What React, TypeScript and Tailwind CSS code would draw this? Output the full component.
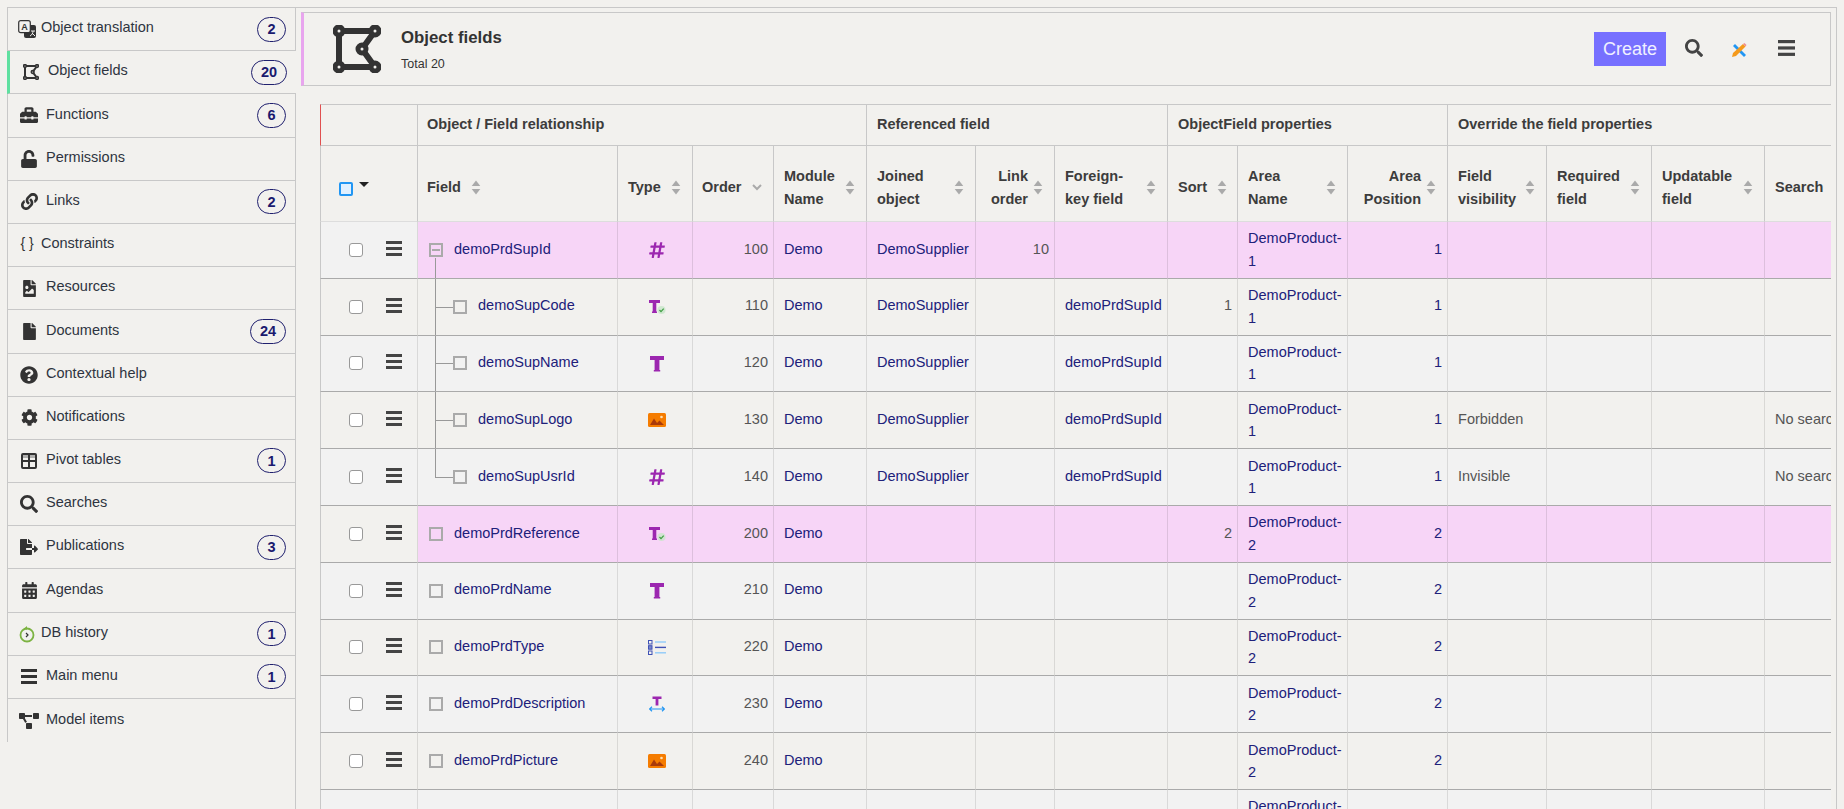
import type { ReactNode } from "react"
import {
  FaToolbox, FaUnlock, FaLink, FaFileImage, FaFile, FaQuestionCircle, FaCog,
  FaSearch, FaFileExport, FaCalendarAlt, FaHashtag, FaProjectDiagram,
} from "react-icons/fa"

// ─── Small drawings ───────────────────────────────────────────────────────────
function VectorIcon({ size }: { size: number }) {
  const nodes = [[6, 6], [42, 6], [29, 24], [42, 42], [6, 42]]
  return (
    <svg viewBox="0 0 48 48" width={size} height={size}>
      <path d="M6 6H42L29 24L42 42H6Z" fill="none" stroke="#333" strokeWidth="6" />
      {nodes.map(([x, y]) => (
        <circle key={x * 100 + y} cx={x} cy={y} r="4" fill="#f2f1ee" stroke="#333" strokeWidth="5" />
      ))}
    </svg>
  )
}

function BarsIcon({ size = 16, color = "#444" }: { size?: number; color?: string }) {
  return (
    <svg viewBox="0 0 16 15" width={size} height={(size * 15) / 16} fill={color}>
      <rect x="0" y="0" width="16" height="3" />
      <rect x="0" y="6" width="16" height="3" />
      <rect x="0" y="12" width="16" height="3" />
    </svg>
  )
}

function TranslateIcon() {
  return (
    <svg viewBox="0 0 18 18" width="18" height="18">
      <rect x="6" y="5" width="12" height="13" rx="2" fill="#333" />
      <rect x="0.7" y="0.7" width="11.6" height="12" rx="2" fill="#f2f1ee" stroke="#333" strokeWidth="1.2" />
      <text x="6.5" y="10" fontSize="9" fontWeight="700" textAnchor="middle" fill="#333" fontFamily="Liberation Sans">A</text>
      <path d="M13 11h4M15 11c0 2-1 4-3 5M14 13c1 1 2 2 3 3" stroke="#f2f1ee" strokeWidth="1" fill="none" />
    </svg>
  )
}

function PivotIcon() {
  return (
    <svg viewBox="0 0 16 16" width="16" height="16">
      <rect x="1" y="1" width="14" height="14" rx="1" fill="none" stroke="#333" strokeWidth="2" />
      <path d="M8 1v14M1 8h14" stroke="#333" strokeWidth="2" />
      <path d="M1 1h14v4H1z" fill="#333" opacity="0.35" />
    </svg>
  )
}

function HistoryIcon() {
  return (
    <svg viewBox="0 0 16 18" width="16" height="18">
      <circle cx="8" cy="10" r="6.5" fill="none" stroke="#7cb342" strokeWidth="1.8" />
      <path d="M8 1l-2.4 2L8 5z" fill="#7cb342" />
      <path d="M7 8l2 2-2 2" fill="none" stroke="#333" strokeWidth="1.2" />
    </svg>
  )
}

function RulerPencilIcon() {
  return (
    <svg viewBox="0 0 16 16" width="16" height="16">
      <path d="M2 4L4 2L15 13L13 15Z" fill="#2196f3" />
      <path d="M1 15L2 11L12 2L14.5 4.5L5 14Z" fill="#f59a1b" />
      <path d="M12 2L13.5 1L15.5 3L14.5 4.5Z" fill="#ef8f8f" />
    </svg>
  )
}

function TypeT({ small }: { small?: boolean }) {
  if (small) return <path d="M0 1h11v3H7.3v8.5h0.7V14H3v-1.5h0.7V4H0z" fill="#9c27b0" />
  return <path d="M1 1h14v4h-4.6v10h0.8v1.5H4.8V15h0.8V5H1z" fill="#9c27b0" />
}

function TypeIcon({ kind }: { kind: string }) {
  if (kind === "hash") return <FaHashtag size={18} color="#9c27b0" />
  if (kind === "t")
    return (
      <svg viewBox="0 0 16 17" width="16" height="17">
        <TypeT />
      </svg>
    )
  if (kind === "tcheck")
    return (
      <svg viewBox="0 0 17 16" width="17" height="16">
        <TypeT small />
        <circle cx="12.5" cy="11" r="4" fill="#c8e6c9" opacity="0.8" />
        <path d="M10.5 11l1.5 1.6 2.7-3" fill="none" stroke="#43a047" strokeWidth="1.3" />
      </svg>
    )
  if (kind === "img")
    return (
      <svg viewBox="0 0 18 14" width="18" height="14">
        <rect width="18" height="14" rx="1.5" fill="#f57c00" />
        <path d="M2 12L6 5.5L9 10L11.5 7.5L16 12Z" fill="#a93a0a" />
        <circle cx="13.5" cy="4" r="1.3" fill="#ffe0b2" />
      </svg>
    )
  if (kind === "list")
    return (
      <svg viewBox="0 0 18 15" width="18" height="15">
        <rect x="0.5" y="0.5" width="3.5" height="3.5" fill="none" stroke="#3f51b5" />
        <rect x="0.5" y="5.7" width="3.5" height="3.5" fill="#7986cb" stroke="#3f51b5" />
        <rect x="0.5" y="11" width="3.5" height="3.5" fill="none" stroke="#3f51b5" />
        <path d="M7 2h11" stroke="#90caf9" strokeWidth="1.4" />
        <path d="M7 7.4h11" stroke="#3f51b5" strokeWidth="1.4" />
        <path d="M7 12.8h11" stroke="#90caf9" strokeWidth="1.4" />
      </svg>
    )
  return (
    <svg viewBox="0 0 16 16" width="16" height="16">
      <path d="M3.5 0.5h9v2.6H9.4v6.4H6.6V3.1H3.5z" fill="#9c27b0" />
      <path d="M0.5 13h15M3 10.8L0.5 13L3 15.2M13 10.8L15.5 13L13 15.2" fill="none" stroke="#2196f3" strokeWidth="1.2" />
    </svg>
  )
}

function SortIcon() {
  return (
    <svg viewBox="0 0 9 14" width="10" height="15" className="shrink-0" fill="#aaa">
      <path d="M4.5 0.5L8.5 5.5H0.5Z" />
      <path d="M4.5 13.5L8.5 8.5H0.5Z" />
    </svg>
  )
}

function ChevronIcon() {
  return (
    <svg viewBox="0 0 10 7" width="10" height="7" className="shrink-0">
      <path d="M1 1l4 4 4-4" fill="none" stroke="#aaa" strokeWidth="2" />
    </svg>
  )
}

// ─── Data ─────────────────────────────────────────────────────────────────────
const MENU: { label: string; icon: ReactNode; count?: number; narrow?: boolean; active?: boolean }[] = [
  { label: "Object translation", icon: <TranslateIcon />, count: 2, narrow: true },
  { label: "Object fields", icon: <VectorIcon size={16} />, count: 20, active: true },
  { label: "Functions", icon: <FaToolbox size={18} color="#333" />, count: 6 },
  { label: "Permissions", icon: <FaUnlock size={18} color="#333" /> },
  { label: "Links", icon: <FaLink size={17} color="#333" />, count: 2 },
  { label: "Constraints", icon: <span className="text-[14px] text-[#333] pb-[3px]">{"{ }"}</span>, narrow: true },
  { label: "Resources", icon: <FaFileImage size={17} color="#333" /> },
  { label: "Documents", icon: <FaFile size={17} color="#333" />, count: 24 },
  { label: "Contextual help", icon: <FaQuestionCircle size={18} color="#333" /> },
  { label: "Notifications", icon: <FaCog size={17} color="#333" /> },
  { label: "Pivot tables", icon: <PivotIcon />, count: 1 },
  { label: "Searches", icon: <FaSearch size={18} color="#333" /> },
  { label: "Publications", icon: <FaFileExport size={18} color="#333" />, count: 3 },
  { label: "Agendas", icon: <FaCalendarAlt size={17} color="#333" /> },
  { label: "DB history", icon: <HistoryIcon />, count: 1, narrow: true },
  { label: "Main menu", icon: <BarsIcon size={16} color="#333" />, count: 1 },
  { label: "Model items", icon: <FaProjectDiagram size={20} color="#333" /> },
]

const COLUMNS: { label: string; width: string; wide?: boolean; right?: boolean; order?: boolean; plain?: boolean; tight?: boolean }[] = [
  { label: "Field", width: "w-[200px]", tight: true },
  { label: "Type", width: "w-[75px]" },
  { label: "Order", width: "w-[81px]", order: true, tight: true },
  { label: "Module\nName", width: "w-[93px]", wide: true },
  { label: "Joined\nobject", width: "w-[109px]", wide: true },
  { label: "Link\norder", width: "w-[79px]", right: true },
  { label: "Foreign-\nkey field", width: "w-[113px]", wide: true },
  { label: "Sort", width: "w-[70px]" },
  { label: "Area\nName", width: "w-[110px]", wide: true },
  { label: "Area\nPosition", width: "w-[100px]", right: true },
  { label: "Field\nvisibility", width: "w-[99px]", wide: true },
  { label: "Required\nfield", width: "w-[105px]", wide: true },
  { label: "Updatable\nfield", width: "w-[113px]", wide: true },
  { label: "Search", width: "w-[120px]", plain: true },
]

type Row = {
  field: string
  type: string
  order?: number
  module?: string
  joined?: string
  link?: number
  fk?: string
  sort?: number
  area: string
  pos?: number
  visibility?: string
  search?: string
  pink?: boolean
  child?: "mid" | "last"
  parent?: boolean
}

const ROWS: Row[] = [
  { field: "demoPrdSupId", type: "hash", order: 100, module: "Demo", joined: "DemoSupplier", link: 10, area: "DemoProduct-1", pos: 1, pink: true, parent: true },
  { field: "demoSupCode", type: "tcheck", order: 110, module: "Demo", joined: "DemoSupplier", fk: "demoPrdSupId", sort: 1, area: "DemoProduct-1", pos: 1, child: "mid" },
  { field: "demoSupName", type: "t", order: 120, module: "Demo", joined: "DemoSupplier", fk: "demoPrdSupId", area: "DemoProduct-1", pos: 1, child: "mid" },
  { field: "demoSupLogo", type: "img", order: 130, module: "Demo", joined: "DemoSupplier", fk: "demoPrdSupId", area: "DemoProduct-1", pos: 1, visibility: "Forbidden", search: "No search", child: "mid" },
  { field: "demoSupUsrId", type: "hash", order: 140, module: "Demo", joined: "DemoSupplier", fk: "demoPrdSupId", area: "DemoProduct-1", pos: 1, visibility: "Invisible", search: "No search", child: "last" },
  { field: "demoPrdReference", type: "tcheck", order: 200, module: "Demo", sort: 2, area: "DemoProduct-2", pos: 2, pink: true },
  { field: "demoPrdName", type: "t", order: 210, module: "Demo", area: "DemoProduct-2", pos: 2 },
  { field: "demoPrdType", type: "list", order: 220, module: "Demo", area: "DemoProduct-2", pos: 2 },
  { field: "demoPrdDescription", type: "twidth", order: 230, module: "Demo", area: "DemoProduct-2", pos: 2 },
  { field: "demoPrdPicture", type: "img", order: 240, module: "Demo", area: "DemoProduct-2", pos: 2 },
]

// ─── Table pieces ─────────────────────────────────────────────────────────────
function Cell({ children, pink, right, gray, flat }: { children?: ReactNode; pink?: boolean; right?: boolean; gray?: boolean; flat?: boolean }) {
  return (
    <td
      className={`h-[56.8px] border-b border-r border-b-[#aaa] border-r-black/10 pl-[10px] pr-[5px] align-middle overflow-hidden ${flat ? "" : "pb-[2px]"} ${pink ? "bg-[#f7d5f7]" : ""} ${right ? "text-right" : ""} ${gray ? "text-[#555]" : "text-[#20207a]"}`}
    >
      {children}
    </td>
  )
}

function FieldCell({ row }: { row: Row }) {
  return (
    <td className={`relative h-[56.8px] border-b border-r border-b-[#aaa] border-r-black/10 align-middle text-[#20207a] ${row.pink ? "bg-[#f7d5f7]" : ""}`}>
      {row.parent && <div className="absolute left-[17px] top-[36px] bottom-0 w-px bg-[#999]" />}
      {row.child === "mid" && <div className="absolute left-[17px] top-0 bottom-0 w-px bg-[#999]" />}
      {row.child === "last" && <div className="absolute left-[17px] top-0 h-1/2 w-px bg-[#999]" />}
      {row.child && <div className="absolute left-[17px] top-1/2 h-px w-[18px] bg-[#999]" />}
      <div className={`flex items-center gap-[11px] ${row.child ? "pl-[35px]" : "pl-[11px]"}`}>
        <span className="flex h-[14px] w-[14px] shrink-0 items-center justify-center border-2 border-[#aaa]">
          {row.parent && <span className="h-[2px] w-[8px] bg-[#aaa]" />}
        </span>
        <span className="pb-[2px]">{row.field}</span>
      </div>
    </td>
  )
}

function TableRow({ row, index }: { row: Row; index: number }) {
  const stripe = index % 2 === 0 ? "bg-[#f2f2f2]" : "bg-[#f2f1ee]"
  return (
    <tr className={stripe}>
      <td className="h-[56.8px] border-b border-r border-l border-b-[#aaa] border-r-black/10 border-l-[#c8c8c8] align-middle">
        <div className="flex items-center gap-[23px] pl-[28px]">
          <span className="h-[14px] w-[14px] rounded-[3px] border-[1.5px] border-[#999] bg-white" />
          <span className="-mt-[3px]">
            <BarsIcon />
          </span>
        </div>
      </td>
      <FieldCell row={row} />
      <td className={`h-[56.8px] border-b border-r border-b-[#aaa] border-r-black/10 align-middle ${row.pink ? "bg-[#f7d5f7]" : ""}`}>
        <div className="flex justify-center pl-[4px]">
          <TypeIcon kind={row.type} />
        </div>
      </td>
      <Cell pink={row.pink} right gray>{row.order}</Cell>
      <Cell pink={row.pink}>{row.module}</Cell>
      <Cell pink={row.pink}>{row.joined}</Cell>
      <Cell pink={row.pink} right gray>{row.link}</Cell>
      <Cell pink={row.pink}>{row.fk}</Cell>
      <Cell pink={row.pink} right gray>{row.sort}</Cell>
      <Cell pink={row.pink} flat>{row.area}</Cell>
      <Cell pink={row.pink} right>{row.pos}</Cell>
      <Cell pink={row.pink} gray>{row.visibility}</Cell>
      <Cell pink={row.pink} />
      <Cell pink={row.pink} />
      <Cell pink={row.pink} gray>
        <span className="whitespace-nowrap">{row.search}</span>
      </Cell>
    </tr>
  )
}

function GroupHead({ label, span, tight }: { label: string; span: number; tight?: boolean }) {
  return (
    <th colSpan={span} className={`h-[42px] border-t border-b border-r border-[#c8c8c8] pb-[2px] text-left font-bold ${tight ? "pl-[9px]" : "pl-[10px]"}`}>
      {label}
    </th>
  )
}

function ColumnHead({ col }: { col: (typeof COLUMNS)[number] }) {
  const layout = col.wide ? "justify-between" : col.right ? "justify-end gap-[5px]" : "gap-[10px]"
  return (
    <th className={`h-[76px] border-b border-r border-b-[#ddd] border-r-[#c8c8c8] pr-[11px] pt-[8px] font-bold ${col.tight ? "pl-[9px]" : "pl-[10px]"}`}>
      <div className={`flex items-center ${layout}`}>
        <span className={`whitespace-pre-line ${col.right ? "text-right" : "text-left"}`}>{col.label}</span>
        {col.order ? <ChevronIcon /> : col.plain ? null : <SortIcon />}
      </div>
    </th>
  )
}

// ─── Page ─────────────────────────────────────────────────────────────────────
export default function App() {
  return (
    <div className="flex h-[809px] overflow-hidden bg-[#f2f1ee] pl-[7px] pr-[7px] pt-[7px] font-['Liberation_Sans',Arial,sans-serif] text-[14.5px] leading-[22.4px] text-[#333]">
      {/* Side menu */}
      <nav className="relative z-10 w-[288px] shrink-0">
        <div className="border-t border-[#c8c8c8]" />
        {MENU.map((item, i) => (
          <div
            key={item.label}
            className={`flex h-[43.2px] items-center ${i < MENU.length - 1 ? "border-b border-[#c8c8c8]" : ""} ${
              item.active
                ? "-mr-px border-l-[3px] border-l-[#5fe0a0] bg-[#f2f1ee] pl-[10px]"
                : "border-l border-l-[#c8c8c8] pl-[10px]"
            }`}
          >
            <span className={`flex shrink-0 justify-center ${item.narrow ? "mr-[5px] w-[18px]" : "mr-[6px] w-[22px]"}`}>
              {item.icon}
            </span>
            <span className="flex-1 pb-[3.4px] text-[#2e3440]">{item.label}</span>
            {item.count !== undefined && (
              <span
                className={`mr-[9px] flex h-[25px] items-center justify-center rounded-full border border-[#20206e] font-bold text-[#1a1a6e] ${
                  item.count > 9 ? "w-[36px]" : "w-[29px]"
                }`}
              >
                {item.count}
              </span>
            )}
          </div>
        ))}
      </nav>

      {/* Main area */}
      <main className="flex min-w-0 flex-1 flex-col border-l border-r border-t border-[#c8c8c8] pl-[5px] pr-[5px] pt-[4px]">
        <header className="flex h-[74px] shrink-0 items-center border border-l-[3px] border-[#c8c8c8] border-l-[#e8a5ee] pl-[29px] pr-[35px]">
          <VectorIcon size={48} />
          <div className="ml-[20px] flex flex-1 flex-col pt-[1px]">
            <span className="text-[16.8px] font-bold leading-[24px] text-[#333]">Object fields</span>
            <span className="mt-[4px] text-[12.5px] leading-[20px] text-[#333]">Total 20</span>
          </div>
          <button className="mr-px flex h-[34px] w-[72px] items-center justify-center bg-[#7770ff] text-[18px] text-[#f0f0ff]">
            Create
          </button>
          <span className="ml-[18px] -mt-[2px]">
            <FaSearch size={18} color="#444" />
          </span>
          <span className="ml-[28px] mt-[2px]">
            <RulerPencilIcon />
          </span>
          <span className="ml-[31px] -mt-[2px]">
            <BarsIcon size={17} color="#444" />
          </span>
        </header>

        <div className="ml-[19px] mt-[18px] min-h-0 flex-1 overflow-hidden">
          <table className="w-[1565px] table-fixed border-separate border-spacing-0">
            <colgroup>
              <col className="w-[98px]" />
              {COLUMNS.map((col) => (
                <col key={col.label} className={col.width} />
              ))}
            </colgroup>
            <thead className="text-[#3c3c3c]">
              <tr>
                <th className="h-[42px] border-l border-r border-t border-b border-[#c8c8c8] border-l-[#e05050]" />
                <GroupHead label="Object / Field relationship" span={4} tight />
                <GroupHead label="Referenced field" span={3} />
                <GroupHead label="ObjectField properties" span={3} />
                <GroupHead label="Override the field properties" span={4} />
              </tr>
              <tr>
                <th className="h-[76px] border-b border-l border-r border-b-[#ddd] border-l-[#c8c8c8] border-r-[#c8c8c8] pt-[6px]">
                  <div className="flex items-center gap-[6px] pl-[18px]">
                    <span className="mt-[4px] h-[14px] w-[14px] rounded-[2px] border-2 border-[#2196f3] bg-[#e0f0ff]" />
                    <span className="-mt-[4px] h-0 w-0 border-x-[5px] border-t-[5px] border-x-transparent border-t-[#222]" />
                  </div>
                </th>
                {COLUMNS.map((col) => (
                  <ColumnHead key={col.label} col={col} />
                ))}
              </tr>
            </thead>
            <tbody>
              {ROWS.map((row, i) => (
                <TableRow key={row.field} row={row} index={i} />
              ))}
              <tr className="bg-[#f2f2f2]">
                <td className="h-[56.8px] border-l border-r border-l-[#c8c8c8] border-r-black/10" />
                <td className="border-r border-r-black/10" />
                <td className="border-r border-r-black/10" />
                <Cell />
                <Cell />
                <Cell />
                <Cell />
                <Cell />
                <Cell />
                <Cell flat>DemoProduct-2</Cell>
                <Cell />
                <Cell />
                <Cell />
                <Cell />
                <Cell />
              </tr>
            </tbody>
          </table>
        </div>
      </main>
    </div>
  )
}
